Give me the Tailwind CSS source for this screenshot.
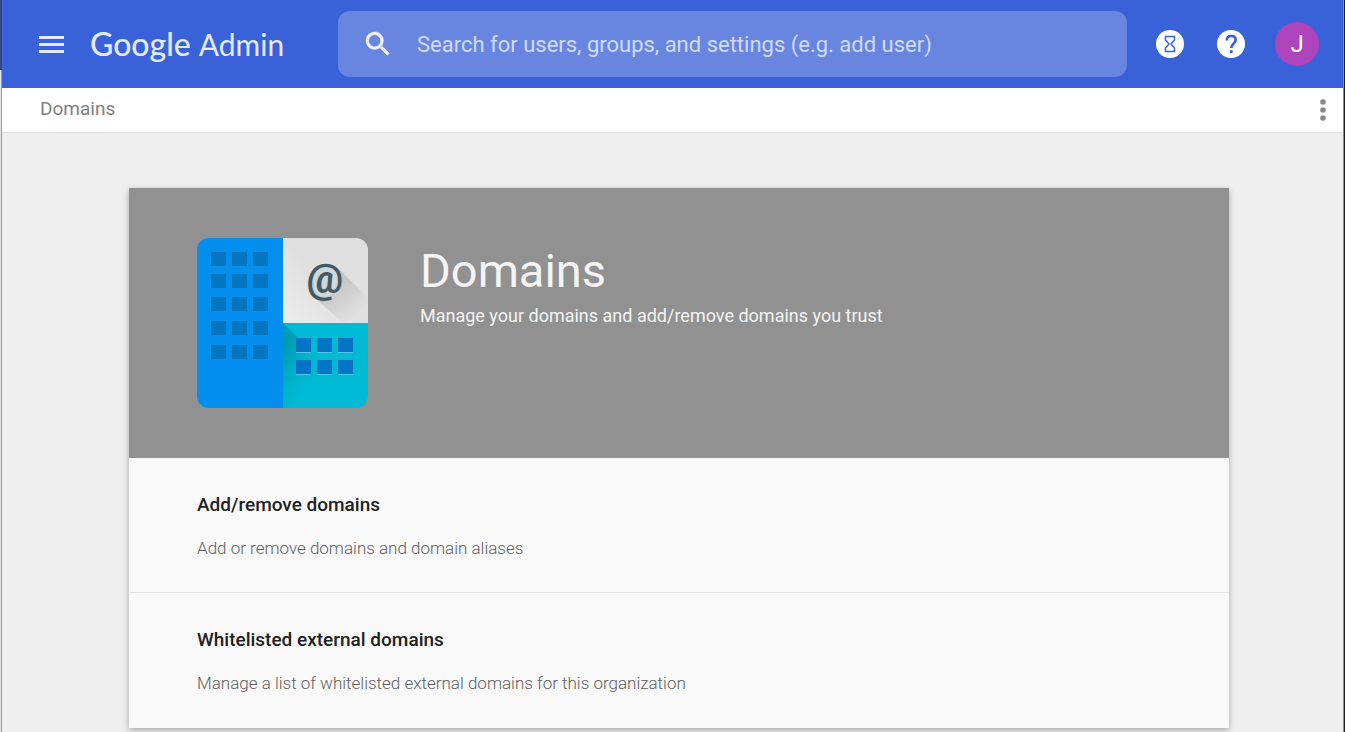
<!DOCTYPE html>
<html lang="en">
<head>
<meta charset="utf-8">
<meta name="viewport" content="width=device-width, initial-scale=1">
<title>Domains - Google Admin</title>
<script src="https://cdn.jsdelivr.net/npm/@tailwindcss/browser@4"></script>
</head>
<body class="flex h-screen overflow-hidden bg-[#efefef] font-['Roboto',sans-serif]">
  <!-- window edge, left -->
  <div class="flex w-[2px] shrink-0 flex-col">
    <div class="h-[70px] bg-[#3d437f]"></div>
    <div class="flex-1 border-r border-[#999999] bg-[#e4e4e4]"></div>
  </div>

  <div class="min-w-0 flex-1">
    <header class="flex h-[88px] items-center bg-[#3962d8] pr-6 pl-9">
      <button type="button" aria-label="Main menu" class="shrink-0">
        <svg class="h-7 w-7" viewBox="0 0 28 28" fill="#e3ebff"><path d="M1 6h25v3H1zM1 13h25v3H1zM1 20h25v3H1z"/></svg>
      </button>
      <a href="#" aria-label="Google Admin" class="ml-6 flex w-[196px] shrink-0 items-baseline gap-2 whitespace-nowrap font-['Lato',sans-serif] leading-10 text-[#e3ebff]">
        <span class="text-[32px] font-medium">Google</span><span class="text-[30px]">Admin</span>
      </a>
      <form role="search" class="ml-[52px] flex h-[66px] min-w-0 flex-1 items-center rounded-xl bg-[#6886df] px-6">
        <button type="submit" aria-label="Search" class="shrink-0">
          <svg class="h-8 w-8" viewBox="0 0 24 24" fill="#eef3ff" stroke="#eef3ff" stroke-width=".4"><path d="M15.500 14h-.79l-.28-.27C15.410 12.590 16 11.110 16 9.500 16 5.910 13.090 3 9.500 3S3 5.910 3 9.500 5.910 16 9.500 16c1.610 0 3.090-.59 4.230-1.570l.27.28v.79l5 4.990L20.490 19l-4.990-5zm-6 0C7.010 14 5 11.990 5 9.500S7.010 5 9.500 5 14 7.010 14 9.500 11.990 14 9.500 14z"/></svg>
        </button>
        <input type="text" aria-label="Search" placeholder="Search for users, groups, and settings (e.g. add user)" class="ml-[23px] min-w-0 flex-1 bg-transparent text-[22px] text-white outline-none placeholder:text-[#cfdcff]">
      </form>
      <button type="button" aria-label="Tasks" class="ml-[29px] shrink-0">
        <svg class="h-7 w-7" viewBox="0 0 28 28"><circle cx="14" cy="14" r="14" fill="#fff"/><path d="M9.500 6.500h9v3.500L15 14l3.500 4v3.500h-9V18l3.500-4-3.500-4z" fill="none" stroke="#3962d8" stroke-width="1.500"/></svg>
      </button>
      <button type="button" aria-label="Help" class="ml-[33px] shrink-0">
        <svg class="h-7 w-7" viewBox="0 0 28 28" fill="none"><circle cx="14" cy="14" r="14" fill="#fff"/><path d="M9.800 10.500C9.800 7.500 11.500 6 14.200 6s4.500 1.600 4.500 4.100c0 3.700-4.500 3.900-4.500 8" stroke="#3962d8" stroke-width="2.700"/><path fill="#3962d8" d="M12.800 20.200h2.900V23h-2.900z"/></svg>
      </button>
      <button type="button" aria-label="Account" class="ml-[30px] h-11 w-11 shrink-0 rounded-full bg-[#ae45bd] text-2xl text-white">J</button>
    </header>

    <nav aria-label="Breadcrumb" class="flex h-[45px] items-center justify-between border-b border-[#dedede] bg-white pr-3 pl-[38px]">
      <a href="#" class="pb-[2px] text-[19px] text-[#808080]">Domains</a>
      <button type="button" aria-label="More options">
        <svg class="h-6 w-4" viewBox="0 0 16 24" fill="#8a8a8a"><circle cx="8" cy="4" r="2.800"/><circle cx="8" cy="12" r="2.800"/><circle cx="8" cy="20" r="2.800"/></svg>
      </button>
    </nav>

    <main class="pt-[55px] pl-[13px]">
      <div class="mx-auto max-w-[1100px] bg-[#f9f9f9] shadow-[0_2px_6px_rgba(0,0,0,0.3)]">
        <section class="flex gap-[52px] bg-[#919191] px-17 py-[50px]">
          <svg class="h-[170px] w-[171px] shrink-0" viewBox="0 0 171 170" role="img" aria-label="Domains">
            <defs>
              <clipPath id="tile"><rect width="171" height="170" rx="12"/></clipPath>
              <linearGradient id="paper" x1="0" y1="1" x2="1" y2="0"><stop offset="0" stop-color="#ececec"/><stop offset=".5" stop-color="#e0e0e0"/><stop offset="1" stop-color="#dedede"/></linearGradient>
              <linearGradient id="cast" gradientUnits="userSpaceOnUse" x1="128" y1="42" x2="162" y2="76"><stop offset="0" stop-color="#000" stop-opacity=".16"/><stop offset="1" stop-color="#000" stop-opacity="0"/></linearGradient>
              <linearGradient id="shade" gradientUnits="userSpaceOnUse" x1="86" y1="115" x2="128" y2="140"><stop offset="0" stop-color="#00808f" stop-opacity=".5"/><stop offset="1" stop-color="#00bcd4" stop-opacity="0"/></linearGradient>
            </defs>
            <g clip-path="url(#tile)">
              <path fill="#048fef" d="M0 0h86v170H0z"/>
              <path fill="url(#paper)" d="M86 0h85v85H86z"/>
              <path fill="#00bad5" d="M86 85h85v85H86z"/>
              <path fill="url(#shade)" d="M86 85l85 85H86z"/>
              <path fill="url(#cast)" d="M142 31l29 29v25h-25l-30-27z"/>
              <ellipse cx="127" cy="43" rx="14" ry="16" fill="#cfd8dc"/>
              <path fill="#0475c0" d="M14 14h15v14H14zM35 14h15v14H35zM56 14h15v14H56zM14 36h15v14H14zM35 36h15v14H35zM56 36h15v14H56zM14 59h15v14H14zM35 59h15v14H35zM56 59h15v14H56zM14 83h15v14H14zM35 83h15v14H35zM56 83h15v14H56zM14 107h15v14H14zM35 107h15v14H35zM56 107h15v14H56z"/>
              <path fill="#4fc6ec" d="M99 114h15v1H99zM120 114h15v1h-15zM141 114h15v1h-15zM99 136h15v1H99zM120 136h15v1h-15zM141 136h15v1h-15z"/>
              <path fill="#0475c4" d="M99 100h15v14H99zM120 100h15v14h-15zM141 100h15v14h-15zM99 122h15v14H99zM120 122h15v14h-15zM141 122h15v14h-15z"/>
              <text x="128" y="55" text-anchor="middle" font-family="Roboto, sans-serif" font-weight="700" font-size="41" fill="#455a64">@</text>
            </g>
          </svg>
          <div class="pt-1">
            <h1 class="pt-px text-[47px] leading-[56px] text-[#f4f4f4]">Domains</h1>
            <p class="mt-[3px] text-[18px] leading-7 text-[#f4f4f4]">Manage your domains and add/remove domains you trust</p>
          </div>
        </section>
        <a href="#" class="block border-b border-[#e2e2e2] px-17 pt-[33px] pb-[30px]">
          <h2 class="text-[19px] leading-7 font-medium text-[#212121]">Add/remove domains</h2>
          <p class="mt-[15px] text-[17px] leading-7 font-light text-[#606060]">Add or remove domains and domain aliases</p>
        </a>
        <a href="#" class="block px-17 pt-[33px] pb-[31px]">
          <h2 class="text-[19px] leading-7 font-medium text-[#212121]">Whitelisted external domains</h2>
          <p class="mt-[15px] text-[17px] leading-7 font-light text-[#606060]">Manage a list of whitelisted external domains for this organization</p>
        </a>
      </div>
    </main>
  </div>

  <!-- window edge, right -->
  <div class="w-[2px] shrink-0 border-l border-[#8c8c8c] bg-[#202124]"></div>
</body>
</html>
